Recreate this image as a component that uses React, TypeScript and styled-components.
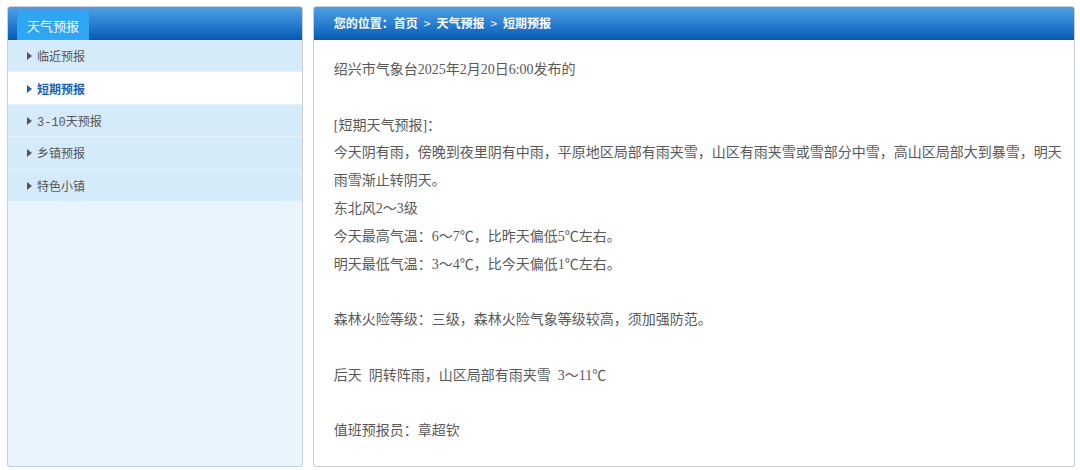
import React from 'react';
import styled, { createGlobalStyle } from 'styled-components';

const GlobalStyle = createGlobalStyle`
  html, body {
    margin: 0;
    padding: 0;
    background: #fff;
    font-family: "Liberation Serif", "Noto Sans CJK SC", serif;
  }
`;

const StPage = styled.div`
  display: flex;
  gap: 10px;
  padding: 6px 5px 0 7px;
  height: 461px;
`;

const StPanel = styled.section<{ $width: number; $bg: string }>`
  box-sizing: border-box;
  width: ${(p) => p.$width}px;
  height: 461px;
  border: 1px solid #c9cfd6;
  border-radius: 3px;
  background: ${(p) => p.$bg};
  overflow: hidden;
  display: flex;
  flex-direction: column;
  box-shadow: 0 1px 1px rgba(0, 0, 0, 0.06);
`;

const StHead = styled.header`
  height: 33px;
  flex: 0 0 33px;
  background: linear-gradient(to bottom, #4f9fe2 0%, #2a7fd0 50%, #0559b2 100%);
  display: flex;
  align-items: flex-end;
  padding: 0 9px;
`;

const StTab = styled.div`
  height: 29px;
  padding: 0 10px;
  background: #2ea6f4;
  border-radius: 3px 3px 0 0;
  color: #fff;
  font-family: "Noto Sans CJK SC", sans-serif;
  font-size: 13px;
  line-height: 29px;
`;

const StMenu = styled.ul`
  list-style: none;
  margin: 0;
  padding: 0;
`;

const StItem = styled.li<{ $active?: boolean }>`
  height: 31.4px;
  border-bottom: 1px solid #e7f3fc;
  background: ${(p) => (p.$active ? '#fff' : '#d6ebfa')};
  display: flex;
  align-items: center;
  padding: 1px 0 0 19px;
  box-sizing: border-box;
  height: 32.4px;
  gap: 5px;
  font-family: "Liberation Mono", "Noto Sans CJK SC", monospace;
  font-size: 12px;
  color: ${(p) => (p.$active ? '#1a5fb4' : '#555')};
  font-weight: ${(p) => (p.$active ? 600 : 400)};
  &::before {
    content: '';
    border-left: 5px solid ${(p) => (p.$active ? '#1a5fb4' : '#555')};
    border-top: 4px solid transparent;
    border-bottom: 4px solid transparent;
  }
`;

const StCrumb = styled.div`
  height: 33px;
  flex: 0 0 33px;
  background: linear-gradient(to bottom, #4f9fe2 0%, #2a7fd0 50%, #0559b2 100%);
  color: #fff;
  font-family: "Noto Sans CJK SC", sans-serif;
  font-weight: 700;
  font-size: 12px;
  line-height: 32px;
  padding-left: 20px;
  span {
    margin: 0 6px;
    font-weight: 400;
  }
`;

const StBody = styled.div`
  padding: 16px 10px 0 20px;
  color: #595959;
  font-size: 14px;
  line-height: 27.8px;
  p {
    margin: 0;
    min-height: 27.8px;
    white-space: pre-wrap;
  }
`;

const menu = ['临近预报', '短期预报', '3-10天预报', '乡镇预报', '特色小镇'];

const lines = [
  '绍兴市气象台2025年2月20日6:00发布的',
  '',
  '[短期天气预报]：',
  '今天阴有雨，傍晚到夜里阴有中雨，平原地区局部有雨夹雪，山区有雨夹雪或雪部分中雪，高山区局部大到暴雪，明天雨雪渐止转阴天。',
  '东北风2～3级',
  '今天最高气温：6～7℃，比昨天偏低5℃左右。',
  '明天最低气温：3～4℃，比今天偏低1℃左右。',
  '',
  '森林火险等级：三级，森林火险气象等级较高，须加强防范。',
  '',
  '后天  阴转阵雨，山区局部有雨夹雪  3～11℃',
  '',
  '值班预报员：章超钦',
];

function App() {
  return (
    <>
      <GlobalStyle />
      <StPage>
        <StPanel $width={296} $bg="#e8f5fe">
          <StHead>
            <StTab>天气预报</StTab>
          </StHead>
          <StMenu>
            {menu.map((m) => (
              <StItem key={m} $active={m === '短期预报'}>
                {m}
              </StItem>
            ))}
          </StMenu>
        </StPanel>
        <StPanel $width={763} $bg="#fff">
          <StCrumb>
            您的位置：首页<span>&gt;</span>天气预报<span>&gt;</span>短期预报
          </StCrumb>
          <StBody>
            {lines.map((l, i) => (
              <p key={i}>{l}</p>
            ))}
          </StBody>
        </StPanel>
      </StPage>
    </>
  );
}

export default App;
